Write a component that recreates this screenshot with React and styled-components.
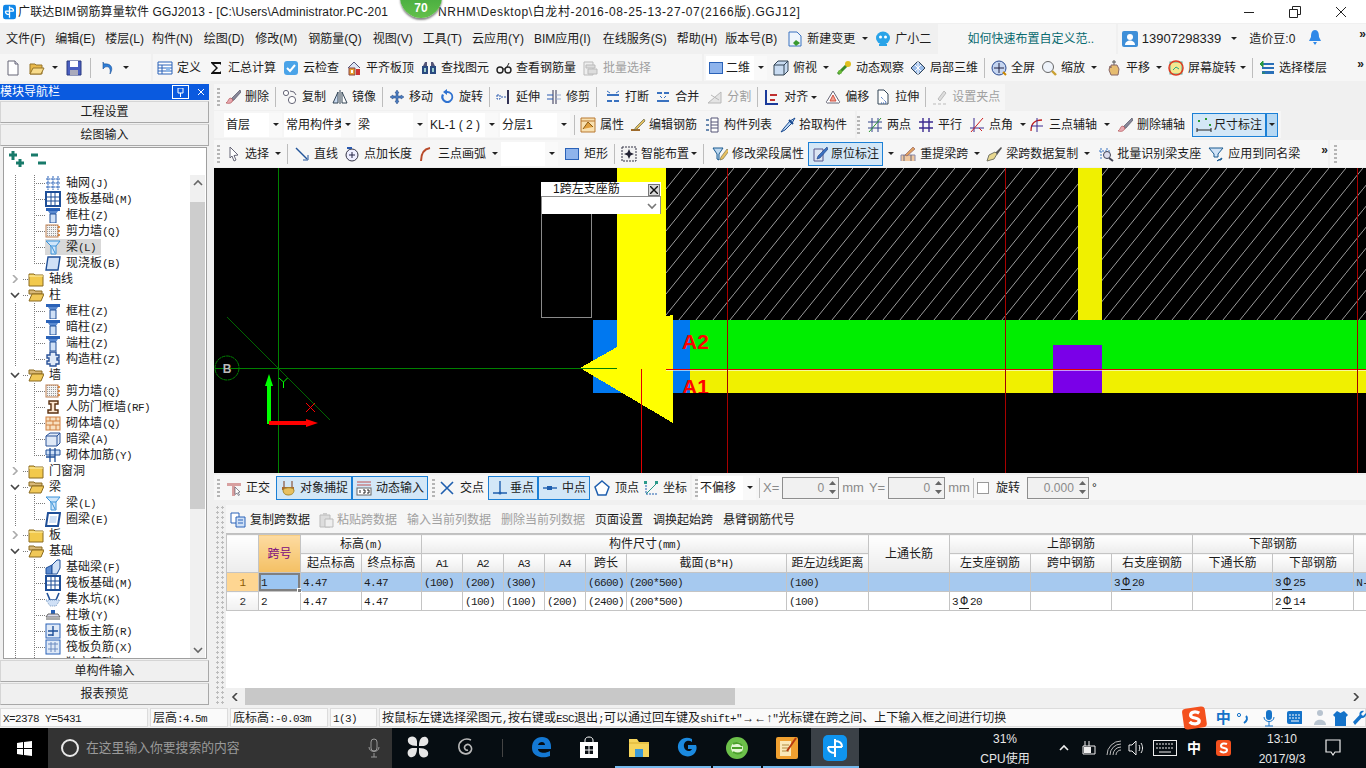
import React from 'react';
import styled, { createGlobalStyle } from 'styled-components';

const GlobalStyle = createGlobalStyle`
  html, body {
    margin: 0;
    padding: 0;
    background: #f0f0f0;
  }
  * {
    box-sizing: border-box;
  }
`;

const UI_FONT = '"Liberation Sans", "Noto Sans CJK SC", sans-serif';

const Page = styled.div`
  position: relative;
  width: 1366px;
  height: 768px;
  overflow: hidden;
  display: flex;
  flex-direction: column;
  background: #f0f0f0;
  color: #1c1c1c;
  font: 12px/16px ${UI_FONT};
`;

/* half width text, the app draws latin and digits in a narrow bitmap font */
const Hw = styled.span`
  font-family: "Liberation Mono", monospace;
  font-size: 11px;
  letter-spacing: -0.6px;
`;

const Label = styled.span`
  margin-left: ${(p) => p.$ml || 0}px;
  font-size: ${(p) => p.$size || 12}px;
`;

const Spacer = styled.span`
  width: ${(p) => p.$w}px;
  flex-shrink: 0;
`;

/* ---------- title and menu ---------- */

const TitleBar = styled.div`
  height: 23px;
  background: #fff;
  display: flex;
  align-items: center;
  padding-left: 3px;
  white-space: nowrap;
  flex-shrink: 0;
`;

const TitleHead = styled.div`
  width: 420px;
  margin-left: 2px;
  letter-spacing: 0.15px;
`;

const TitleTail = styled.div`
  flex: 1;
  letter-spacing: 0.62px;
`;

const WinButtons = styled.div`
  display: flex;
  width: 123px;
  flex-shrink: 0;
  justify-content: space-between;
  padding-right: 19px;
  align-items: center;
`;

const ScoreBadge = styled.div`
  position: absolute;
  left: 400px;
  top: -24px;
  width: 42px;
  height: 42px;
  border-radius: 50%;
  background: linear-gradient(#2f9a36, #63c04a);
  box-shadow: 0 2px 2px #8a8a8a;
  color: #fff;
  font-size: 12px;
  font-weight: bold;
  text-align: center;
  padding-top: 24px;
`;

const MenuBar = styled.div`
  height: 31px;
  display: flex;
  align-items: center;
  padding-left: 6px;
  gap: 10px;
  white-space: nowrap;
  flex-shrink: 0;
`;

const MenuItem = styled.span`
  margin-left: ${(p) => p.$ml || 0}px;
`;

const Banner = styled.div`
  width: 187px;
  height: 30px;
  margin-left: -3px;
  background: #f6f6f6;
  color: #0a6b70;
  display: flex;
  align-items: center;
  padding-left: 29px;
`;

const Account = styled.div`
  flex: 1;
  height: 30px;
  margin-left: -8px;
  background: #f6f6f6;
  display: flex;
  align-items: center;
  gap: 4px;
  padding-left: 4px;
`;

/* ---------- toolbars ---------- */

const ToolRow = styled.div`
  height: ${(p) => p.$h || 27}px;
  margin-bottom: ${(p) => p.$mb || 0}px;
  display: flex;
  gap: 2px;
  white-space: nowrap;
  flex-shrink: 0;
`;

const Bar = styled.div`
  display: flex;
  align-items: center;
  gap: ${(p) => p.$gap || 7}px;
  width: ${(p) => (p.$w ? `${p.$w}px` : 'auto')};
  flex: ${(p) => (p.$grow ? 1 : 'none')};
  padding: 0 3px 0 ${(p) => p.$pl ?? 3}px;
  background: #f6f6f6;
`;

const ToolBtn = styled.div`
  display: flex;
  align-items: center;
  gap: ${(p) => p.$tg ?? 4}px;
  height: 24px;
  margin-left: ${(p) => p.$ml || 0}px;
  padding: ${(p) => (p.$on ? '0 3px' : '0')};
  color: ${(p) => (p.$off ? '#a0a0a0' : '#1c1c1c')};
  background: ${(p) => (p.$on ? '#d3e7f7' : 'transparent')};
  border: ${(p) => (p.$on ? '1px solid #1b80d6' : 'none')};
`;

const Caret = styled.span`
  display: inline-block;
  width: 0;
  height: 0;
  margin-left: ${(p) => p.$ml || 0}px;
  border-left: 3px solid transparent;
  border-right: 3px solid transparent;
  border-top: 3px solid #222;
  flex-shrink: 0;
`;

const Sep = styled.span`
  width: 1px;
  height: 20px;
  margin: 0 ${(p) => p.$mx || 0}px;
  background: #bdbdbd;
  flex-shrink: 0;
`;

const Grip = styled.span`
  width: 3px;
  height: 18px;
  margin-left: ${(p) => p.$ml || 0}px;
  flex-shrink: 0;
  background: repeating-linear-gradient(#b5b5b5 0 2px, transparent 2px 4px);
`;

const More = styled.span`
  font-size: 12px;
  font-weight: bold;
  line-height: 10px;
  align-self: flex-start;
  margin: 5px 0 0 ${(p) => p.$ml || 0}px;
`;

const ComboBox = styled.div`
  width: ${(p) => p.$w}px;
  height: 24px;
  margin-left: ${(p) => p.$ml || 0}px;
  display: flex;
  align-items: center;
  flex-shrink: 0;
`;

const ComboValue = styled.div`
  flex: 1;
  height: 100%;
  background: #fff;
  padding: ${(p) => (p.$flush ? '0 0 0 2px' : '4px 0 0 2px')};
  overflow: hidden;
`;

const ComboArrow = styled.div`
  width: 13px;
  height: 100%;
  background: #f9f9f9;
  display: flex;
  align-items: center;
  justify-content: center;
`;

const SplitArrow = styled.div`
  width: 13px;
  height: 24px;
  margin-left: -7px;
  background: #b6d8f3;
  border: 1px solid #1b80d6;
  display: flex;
  align-items: center;
  justify-content: center;
`;

/* ---------- work area ---------- */

const Workspace = styled.div`
  height: 621px;
  margin-top: 3px;
  display: flex;
  gap: 5px;
  flex-shrink: 0;
`;

const Nav = styled.div`
  width: 209px;
  display: flex;
  flex-direction: column;
  gap: 1px;
`;

const NavHead = styled.div`
  height: 16px;
  background: #0a5adf;
  color: #fff;
  display: flex;
  align-items: center;
  line-height: 15px;
  flex-shrink: 0;
`;

const NavTitle = styled.div`
  flex: 1;
`;

const PinBox = styled.div`
  width: 17px;
  height: 14px;
  border: 1px solid #fff;
  display: flex;
  align-items: center;
  justify-content: center;
  margin-right: 5px;
`;

const NavClose = styled.div`
  width: 14px;
  margin-right: 1px;
  display: flex;
  justify-content: center;
`;

const NavButton = styled.div`
  height: 22px;
  flex-shrink: 0;
  background: #f0f0f0;
  border: 1px solid #a8a8a8;
  border-top-color: #d5d5d5;
  border-left-color: #d5d5d5;
  text-align: center;
  line-height: 21px;
`;

const TreeBox = styled.div`
  flex: 1;
  min-height: 0;
  margin: 0 2px 0 3px;
  background: #fff;
  border: 1px solid #9f9f9f;
  display: flex;
  flex-direction: column;
`;

const TreeTools = styled.div`
  height: 27px;
  flex-shrink: 0;
  padding: 3px 0 0 4px;
  display: flex;
  gap: 6px;
`;

const TreeBody = styled.div`
  flex: 1;
  min-height: 0;
  display: flex;
`;

const TreeList = styled.div`
  flex: 1;
  overflow: hidden;
`;

const dots = '#7a7a7a 0 1px, transparent 1px 2px';

const TreeRow = styled.div`
  height: 16px;
  display: flex;
  align-items: center;
  background-repeat: no-repeat;
  background-image: ${(p) => (p.$child
    ? `repeating-linear-gradient(${dots}), repeating-linear-gradient(${dots})`
    : 'none')};
  background-size: 1px 100%, 1px ${(p) => (p.$last ? '50%' : '100%')};
  background-position: 11px 0, 30px 0;
  padding-left: ${(p) => (p.$child ? 30 : 5)}px;
`;

const Chevron = styled.div`
  width: 11px;
  display: flex;
  justify-content: center;
`;

const Connector = styled.span`
  width: ${(p) => p.$w}px;
  margin-left: ${(p) => p.$ml || 0}px;
  border-top: 1px dotted #7a7a7a;
  flex-shrink: 0;
`;

const TreeLabel = styled.div`
  display: flex;
  align-items: center;
  gap: 5px;
  height: 16px;
  padding-right: 5px;
  background: ${(p) => (p.$sel ? '#d9d9d9' : 'transparent')};
`;

const Scroll = styled.div`
  width: 15px;
  margin-right: 1px;
  background: #f0f0f0;
  display: flex;
  flex-direction: column;
  align-items: center;
`;

const ScrollBtn = styled.div`
  height: 16px;
  width: 100%;
  flex-shrink: 0;
  display: flex;
  align-items: center;
  justify-content: center;
`;

const ScrollThumb = styled.div`
  width: 100%;
  height: 307px;
  margin-top: 11px;
  margin-bottom: auto;
  background: #cdcdcd;
`;

const Main = styled.div`
  width: 1152px;
  display: flex;
  flex-direction: column;
`;

const Canvas = styled.div`
  position: relative;
  height: 305px;
  margin-bottom: 2px;
  background: #000;
  flex-shrink: 0;
`;

const CanvasSvg = styled.svg`
  display: block;
`;

const Popup = styled.div`
  position: absolute;
  left: 327px;
  top: 14px;
  width: 120px;
  background: #fff;
`;

const PopupHead = styled.div`
  height: 14px;
  padding-left: 12px;
  line-height: 14px;
  display: flex;
  justify-content: space-between;
  color: #111;
`;

const PopupClose = styled.div`
  width: 12px;
  height: 12px;
  margin: 2px 1px 0 0;
  background: #d8d8d8;
  border: 1px solid #777;
  display: flex;
  align-items: center;
  justify-content: center;
`;

const PopupCombo = styled.div`
  height: 18px;
  border: 1px solid #8c8c8c;
  border-bottom: 0;
  display: flex;
  align-items: center;
  justify-content: flex-end;
  padding-right: 3px;
`;

const NumBox = styled.div`
  width: ${(p) => p.$w || 57}px;
  height: 22px;
  margin-left: ${(p) => p.$ml || 0}px;
  background: #f1f1f1;
  border: 1px solid #8e8e8e;
  color: #8a8a8a;
  display: flex;
  align-items: center;
  justify-content: flex-end;
  gap: 5px;
  padding-right: 2px;
  font-family: "Liberation Sans", sans-serif;
`;

const Spin = styled.div`
  display: flex;
  flex-direction: column;
  gap: 5px;
`;

const GrayText = styled.span`
  color: #8a8a8a;
  font-size: 13px;
  margin-left: ${(p) => p.$ml || 0}px;
`;

const CheckBox = styled.span`
  width: 12px;
  height: 12px;
  background: #fff;
  border: 1px solid #9a9a9a;
  flex-shrink: 0;
`;

/* ---------- span table ---------- */

const GridPanel = styled.div`
  height: 200px;
  margin-top: 5px;
  display: flex;
`;

const GridGrip = styled.div`
  width: 12px;
  flex-shrink: 0;
  background:
    radial-gradient(circle, #bcbcbc 1px, transparent 1.2px) 1px 0 / 5px 5px;
`;

const GridBody = styled.div`
  flex: 1;
  min-width: 0;
  display: flex;
  flex-direction: column;
  background: #fff;
`;

const GridTools = styled.div`
  height: 28px;
  background: #f6f6f6;
  display: flex;
  align-items: center;
  padding: 1px 0 0 4px;
  gap: 10px;
  white-space: nowrap;
  flex-shrink: 0;
`;

const TableWrap = styled.div`
  flex: 1;
  min-height: 0;
  overflow: hidden;
  border-top: 1px solid #c0c0c0;
`;

const Table = styled.table`
  width: 1140px;
  table-layout: fixed;
  border-collapse: collapse;
  white-space: nowrap;
`;

const Th = styled.th`
  height: 19px;
  padding: 0;
  font-weight: normal;
  color: ${(p) => (p.$accent ? '#7a0a80' : '#1c1c1c')};
  background: ${(p) => (p.$accent
    ? 'linear-gradient(#fddba1, #f4c064)'
    : 'linear-gradient(#fff, #ececec)')};
  border: 1px solid #c4c4c4;
  overflow: hidden;
`;

const Td = styled.td`
  position: relative;
  height: 19px;
  padding: 0 0 0 ${(p) => (p.$center ? 0 : 2)}px;
  text-align: ${(p) => (p.$center ? 'center' : 'left')};
  background: ${(p) => (p.$sel ? '#a6c9ef' : '#fff')};
  border: 1px solid #c4c4c4;
  overflow: hidden;
`;

const RowHead = styled(Td)`
  background: ${(p) => (p.$sel ? '#fed692' : 'linear-gradient(#fff, #f0f0f0)')};
  color: ${(p) => (p.$sel ? '#8a5a00' : '#333')};
`;

const ActiveCell = styled(Td)`
  overflow: visible;
  background: #9cc6f2;
  box-shadow: inset 0 0 0 2px #808080;
`;

const FillHandle = styled.span`
  position: absolute;
  right: -2px;
  bottom: -2px;
  width: 5px;
  height: 5px;
  background: #808080;
  border: 1px solid #fff;
`;

const BarSign = styled.span`
  display: inline-block;
  width: 10px;
  margin: 0 1px;
  font-family: "Liberation Mono", monospace;
  font-size: 12px;
  line-height: 11px;
  text-align: center;
  border-bottom: 1px solid #222;
`;

const HScroll = styled.div`
  height: 17px;
  flex-shrink: 0;
  display: flex;
  align-items: center;
  background: #f0f0f0;
`;

const HScrollBtn = styled.div`
  width: 17px;
  display: flex;
  justify-content: center;
  flex-shrink: 0;
`;

const HScrollThumb = styled.div`
  width: 490px;
  height: 100%;
  margin-right: auto;
  background: #c8c8c8;
`;

/* ---------- status ---------- */

const StatusBar = styled.div`
  height: 19px;
  margin-top: 3px;
  display: flex;
  gap: 2px;
  flex-shrink: 0;
  white-space: nowrap;
`;

const StatusCell = styled.div`
  width: ${(p) => (p.$w ? `${p.$w}px` : 'auto')};
  flex: ${(p) => (p.$w ? 'none' : 1)};
  background: #fafafa;
  border: 1px solid #dcdcdc;
  padding: 1px 0 0 2px;
  line-height: 16px;
`;

const Ime = styled.div`
  position: absolute;
  left: 1182px;
  top: 705px;
  width: 184px;
  height: 26px;
  display: flex;
  align-items: center;
  gap: 5px;
`;

const ImeChar = styled.span`
  color: #1573c9;
  font-weight: bold;
  font-size: 15px;
  margin-left: 3px;
`;

/* ---------- taskbar ---------- */

const Taskbar = styled.div`
  height: 40px;
  margin-top: 1px;
  background: #060d12;
  display: flex;
  color: #fff;
  flex-shrink: 0;
`;

const StartBtn = styled.div`
  width: 48px;
  background: #000;
  display: flex;
  align-items: center;
  justify-content: center;
`;

const SearchBox = styled.div`
  width: 344px;
  background: #333;
  display: flex;
  align-items: center;
  padding: 0 12px;
  color: #9a9a9a;
  font-size: 12.8px;
  gap: 6px;
`;

const SearchHint = styled.span`
  flex: 1;
`;

const TaskCell = styled.div`
  width: 48px;
  margin-left: ${(p) => p.$ml || 0}px;
  display: flex;
  align-items: center;
  justify-content: center;
  background: ${(p) => (p.$active ? '#3b4147' : 'transparent')};
  border-bottom: 2px solid ${(p) => (p.$open ? '#76b9ed' : 'transparent')};
  padding-top: ${(p) => (p.$open ? 2 : 0)}px;
`;

const TaskDivider = styled.span`
  width: 1px;
  height: 18px;
  margin: 11px 14px 0 12px;
  background: #444;
`;

const Tray = styled.div`
  margin-left: auto;
  display: flex;
  align-items: center;
`;

const TrayStack = styled.div`
  width: ${(p) => p.$w}px;
  margin: 1px ${(p) => p.$mr || 0}px 0 ${(p) => p.$ml || 0}px;
  text-align: center;
  line-height: 20px;
  font-size: 12px;
  color: #e8e8e8;
`;

const TrayIcon = styled.div`
  width: ${(p) => p.$w || 25}px;
  display: flex;
  justify-content: center;
  font-size: 14px;
  font-weight: bold;
`;

const IconSvg = styled.svg`
  flex-shrink: 0;
`;

/* ---------- icons, 16 x 16 ---------- */

const B = '#2a62b8';
const LB = '#8fb8e8';

const icons = {
  newDoc: <><path d="M3 1h7l3 3v11H3z" fill="#fff" stroke="#667" /><path d="M10 1v3h3" fill="#dde" stroke="#667" /></>,
  open: <><path d="M1 4h5l1 1h6v9H1z" fill="#e8b84a" stroke="#96752a" /><path d="M4 8h11l-3 6H1z" fill="#f8dc8c" stroke="#96752a" /></>,
  save: <><path d="M1 1h14v14H1z" fill="#4a5fc0" stroke="#2a3a80" /><path d="M4 1h8v6H4z" fill="#fff" /><path d="M4 10h8v5H4z" fill="#aab" /></>,
  undo: <path d="M4 2v7l2-2c4-1 6 1 5 7 4-6 1-11-6-10z" fill="#2f7fd8" stroke="#1a4f98" strokeWidth=".6" />,
  define: <><path d="M1 2h14v12H1z" fill="#fff" stroke={B} /><path d="M1 5h14M5 5v9M1 8h14M1 11h14" stroke={B} fill="none" /><path d="M9 7h4v5H9z" fill={LB} /></>,
  sigma: <path d="M3 2h10v3l-1-1H6l4 4-4 4h6l1-1v3H3v-1l5-5-5-5z" fill="#111" />,
  cloud: <><rect x="1" y="1" width="14" height="14" rx="3" fill="#4aa3e8" /><path d="M4 8l3 3 5-6" stroke="#fff" strokeWidth="2" fill="none" /></>,
  align: <><path d="M2 8l6-6 6 6" fill="#dde6f4" stroke="#557" /><path d="M3 8h6v7H3z" fill="#e8a030" stroke="#844" /><path d="M10 9h4v6h-4z" fill="#c33" /><path d="M5 10h2v3H5z" fill="#fff" /></>,
  binoculars: <><path d="M2 6l2-4h2v4zM14 6l-2-4h-2v4z" fill="#557" /><path d="M1 6h6v8H1zM9 6h6v8H9z" fill="#2a4a80" /><path d="M3 8h2v4H3zM11 8h2v4h-2z" fill="#9cc" /></>,
  glasses: <><circle cx="4" cy="10" r="3" fill="none" stroke="#222" strokeWidth="1.4" /><circle cx="12" cy="10" r="3" fill="none" stroke="#222" strokeWidth="1.4" /><path d="M7 9h2M11 7l2-4" stroke="#222" fill="none" /></>,
  batch: <><path d="M1 2h9v13H1z" fill="#eee" stroke="#bbb" /><path d="M3 5h9v3H3zM5 9h9v5H5z" fill="#ddd" stroke="#bbb" /></>,
  square: <rect x="1.5" y="2.5" width="13" height="11" fill="#8fb4ec" stroke="#2a62b8" />,
  box: <><path d="M1 5l4-4h10v10l-4 4H1z" fill="#c9dcf2" stroke="#345" /><path d="M1 5h10v10M11 5l4-4" stroke="#345" fill="none" /></>,
  orbit: <><path d="M2 14L12 4" stroke="#3a8a2a" strokeWidth="3" /><circle cx="12" cy="4" r="3" fill="#e0c020" /><circle cx="4" cy="12" r="2" fill="#68b838" /></>,
  part3d: <><path d="M8 1l7 7-7 7-7-7z" fill="#9cbce8" stroke="#345" /><path d="M5 5l6 6M11 5l-6 6M8 1v14" stroke="#fff" /></>,
  fullscreen: <><circle cx="8" cy="8" r="7" fill="#c5d5f0" stroke="#2a4a90" /><path d="M8 3v10M3 8h10" stroke="#224" /><path d="M12 12l3 3" stroke="#c80" strokeWidth="2" /></>,
  zoom: <><circle cx="7" cy="7" r="5.5" fill="#eef3fa" stroke="#666" /><path d="M11 11l4 4" stroke="#c9a030" strokeWidth="2.4" /></>,
  pan: <><path d="M8 0v5M6 2h4" stroke="#555" /><path d="M3 10l1-4 1 2V5h6l2 4-1 6H5z" fill="#e6bc70" stroke="#866" /></>,
  rotateScreen: <><rect x="2" y="2" width="12" height="12" fill="#f4e890" stroke="#5a9" /><circle cx="8" cy="8" r="7" fill="none" stroke="#e03a20" strokeWidth="1.5" /><path d="M5 10l3-3 3 2" stroke="#2a8" fill="none" /></>,
  floors: <><path d="M3 3h12v2H3zM3 7h12v2H3zM3 11h12v3H3z" fill="#2a70b8" /><path d="M1 4l3-3v6zM3 13h3" fill="#2a9a40" stroke="#2a9a40" /></>,
  eraser: <><path d="M15 1L7 9l-2 4 4-2 7-8z" fill="#889" stroke="#445" strokeWidth=".6" /><path d="M6 9c-3 0-2 3-5 5 4 1 6 0 7-3z" fill="#e8a8b0" stroke="#a44" strokeWidth=".6" /></>,
  copy: <><circle cx="4" cy="4" r="2.6" fill="#fff" stroke="#667" /><circle cx="10" cy="11" r="3.6" fill="#fff" stroke="#667" /><path d="M8 2l4 1 2 3" stroke="#667" fill="none" /></>,
  mirror: <><path d="M1 14L6 3v11z" fill="#c9daf0" stroke="#345" /><path d="M15 14L10 3v11z" fill="#fff" stroke="#345" /><path d="M8 1v14" stroke="#345" /></>,
  move: <path d="M8 1l2 3H9v3h3V6l3 2-3 2V9H9v3h1l-2 3-2-3h1V9H4v1L1 8l3-2v1h3V4H6z" fill="#4a7cc0" stroke="#2a4a80" strokeWidth=".5" />,
  rotate: <path d="M8 2a6 6 0 1 1-5 3l2 1a4 4 0 1 0 3-2v2L4 3l4-3z" fill="#2f72d0" />,
  extend: <><path d="M12 1v14" stroke="#335" strokeWidth="2" /><path d="M1 6h3v4H1zM5 8h6" stroke="#2a5ab0" fill="none" strokeDasharray="2 1" /></>,
  trim: <><path d="M7 1v14M10 1v14" stroke="#335" /><path d="M1 6h6M1 10h6" stroke="#2a5ab0" /><path d="M10 6h5M10 10h5" stroke="#9ac" /></>,
  breakIco: <><path d="M2 5h12v2H2zM2 11h5v2H2zM9 11h5v2H9z" fill="#3a72c0" /><path d="M2 2l3 2M14 2l-3 2" stroke="#3a72c0" /></>,
  merge: <><path d="M2 3h5v2H2zM9 3h5v2H9zM2 11h12v2H2z" fill="#3a72c0" /><path d="M5 7l2 2M11 7L9 9" stroke="#3a72c0" /></>,
  split: <><path d="M1 14L14 3v11z" fill="#e4e4e4" stroke="#b8b8b8" /><path d="M4 6l8 5" stroke="#b8b8b8" /></>,
  alignLeft: <><path d="M2 1v14h12" stroke="#1a3a9a" strokeWidth="2" fill="none" /><path d="M6 5h7v2H6zM6 10h5v2H6z" fill="#c03030" /></>,
  offset: <><path d="M8 2l6 10a1 1 0 0 1-1 2H3a1 1 0 0 1-1-2z" fill="#fff" stroke="#667" /><path d="M8 6l3 6H5z" fill="#f0a090" stroke="#d05040" /></>,
  stretch: <><path d="M3 1h6l4 4v10H3z" fill="#fff" stroke="#345" /><path d="M6 8l6 6M6 14h6" stroke="#2a5ab0" strokeDasharray="1 1" /></>,
  gripIco: <><path d="M12 2l-6 8 2 2 6-8z" fill="#ddd" stroke="#bbb" /><path d="M1 15h3M6 15h3M11 15h3" stroke="#bbb" /></>,
  prop: <><path d="M1 1h14v14H1z" fill="#f8e0b0" stroke="#b87830" /><path d="M3 12l5-7 5 5" fill="#e0a040" stroke="#8a5a10" /><path d="M1 4h14" stroke="#b87830" /></>,
  editBar: <><path d="M1 13h9" stroke="#a06a2a" strokeWidth="2" /><path d="M14 2L6 10l-2 3 3-1 8-8z" fill="#e4c060" stroke="#664" strokeWidth=".7" /></>,
  list: <><path d="M2 2h3v2H2zM2 7h3v2H2zM2 12h3v2H2z" fill="#6a8ab0" /><path d="M7 1h7v14H7z" fill="#fff" stroke="#557" /><path d="M7 5h7M7 8h7M7 11h7" stroke="#557" /></>,
  pick: <><path d="M15 1l-5 3-6 7-3 4 4-2 7-7z" fill="#bcd8f4" stroke="#1a4a90" /><path d="M9 3l4 4" stroke="#1a4a90" strokeWidth="2" /></>,
  twoPoint: <><path d="M5 1v14M11 1v14M1 5h14M1 11h14" stroke="#334488" /><path d="M2 15L14 1" stroke="#2a9a30" /></>,
  parallel: <path d="M5 1v14M11 1v14M1 5h14M1 11h14" stroke="#3a2a90" fill="none" strokeWidth="1.4" />,
  angle: <><path d="M5 1v14M1 11h14" stroke="#3a2a90" /><path d="M2 15L14 1" stroke="#d02020" /><path d="M10 11l3 3" stroke="#d02020" /></>,
  arc: <><path d="M2 14C2 6 6 3 13 3" stroke="#c02020" fill="none" strokeWidth="1.3" /><path d="M8 1v14M2 9h12" stroke="#3a2a90" /></>,
  dimension: <><path d="M1 11v4M15 11v4M1 13h14" stroke="#222" /><rect x="2" y="3" width="2" height="2" fill="#2a9a30" /><rect x="9" y="1" width="2" height="2" fill="#2a9a30" /><rect x="13" y="7" width="2" height="2" fill="#2a9a30" /></>,
  cursor: <path d="M4 1l8 8-4 .5L10 14l-2 1-2-5-2 2z" fill="#fff" stroke="#667" />,
  line: <><path d="M2 2l11 11" stroke="#22559a" strokeWidth="1.4" /><path d="M14 9v5H9" stroke="#22559a" fill="none" /></>,
  pointLen: <><circle cx="8" cy="9" r="6" fill="#eef" stroke="#334" /><path d="M8 6v6M5 9h6" stroke="#224" /><path d="M3 2h5" stroke="#2a5ab0" strokeWidth="2" /></>,
  arc3: <path d="M3 15C3 8 6 3 12 2" stroke="#b84a2a" fill="none" strokeWidth="2" />,
  smart: <><rect x="1" y="1" width="14" height="14" fill="#f2f2f2" stroke="#334" strokeDasharray="2 1" /><path d="M8 3l1.5 3.5L13 8l-3.5 1.5L8 13l-1.5-3.5L3 8l3.5-1.5z" fill="#223" /></>,
  funnelEdit: <><path d="M1 2h10L7 8v6l-2-1V8z" fill="#bcd8f0" stroke="#1a5a90" /><path d="M15 3l-6 8-1 3 3-1 6-8z" fill="#e8c060" stroke="#664" strokeWidth=".6" /></>,
  inPlace: <><path d="M2 3h9v12H2z" fill="#dce6f2" stroke="#558" /><path d="M15 1L6 10l-1 3 3-1 8-9z" fill="#3a72c0" stroke="#1a3a80" strokeWidth=".6" /></>,
  lift: <><path d="M1 15V9h14v6" fill="#f0c8a0" stroke="#88a" /><path d="M4 9v6M11 9v6" stroke="#667" /><path d="M5 9l8-8 2 2-8 7z" fill="#e0a060" stroke="#855" strokeWidth=".6" /></>,
  brush: <><path d="M15 1l-6 6 2 2 5-7z" fill="#555" /><path d="M9 6L3 9l-2 6 7-2 3-5z" fill="#e8d890" stroke="#776" /></>,
  support: <><path d="M1 5h11M3 2v11M9 2v11" stroke="#3a72c0" strokeDasharray="2 1" /><circle cx="9" cy="9" r="3.5" fill="#dde" stroke="#445" /><path d="M11 12l4 3" stroke="#445" strokeWidth="2" /></>,
  applySame: <><path d="M1 2h14L10 8v3H6V8z" fill="#cfe2f6" stroke="#1a5a90" /><path d="M9 15l5-3-1 2h-3z" fill="#3a82d0" stroke="#1a5a90" /></>,
  ortho: <><path d="M1 3h14v3H9v10H6V6H1z" fill="#d8a0a0" /><path d="M9 7l5 5-2 .5 1.5 2.5-1 .6-1.5-2.5-2 1.4z" fill="#fff" stroke="#445" strokeWidth=".6" /></>,
  snap: <><path d="M4 1v7M12 1v7" stroke="#7a3a1a" /><path d="M2 7h12v3H2z" fill="#a86a30" /><path d="M3 10c2-3 10-3 11 0 0 4-3 5-6 5-3 0-5-2-5-5z" fill="#e8c060" stroke="#a88a30" /></>,
  dynamic: <><path d="M1 2h14M1 5h14" stroke="#c05050" /><rect x="1" y="8" width="14" height="7" fill="#fff" stroke="#666" /><path d="M4 10v3M7 10h2v3H7M11 10h2v3h-2" stroke="#222" fill="none" /></>,
  cross: <path d="M2 2l12 12M14 2L2 14" stroke="#1f5faf" strokeWidth="1.6" />,
  perp: <><path d="M8 1v12M1 13h14" stroke="#1f5faf" strokeWidth="1.4" /><circle cx="8" cy="13" r="1.5" fill="#1f5faf" /></>,
  midpoint: <><path d="M1 8h14" stroke="#1f5faf" strokeWidth="1.4" /><rect x="5" y="6" width="5" height="4" fill="#1f5faf" /></>,
  vertex: <path d="M8 1l7 6-3 8H4L1 7z" fill="#fff" stroke="#1f5faf" strokeWidth="1.5" />,
  coord: <><path d="M3 2v12h12" stroke="#1f5faf" strokeDasharray="2 1" fill="none" /><path d="M3 14L14 3" stroke="#2a9a8a" /><rect x="1" y="1" width="3" height="3" fill="#2a9a8a" /><rect x="12" y="1" width="3" height="3" fill="#2a9a8a" /></>,
  copySpan: <><path d="M1 1h8v10H1z" fill="#fff" stroke={B} /><path d="M6 5h9v10H6z" fill="#cfe0f6" stroke={B} /><path d="M8 8h5M8 11h5" stroke={B} /></>,
  pasteSpan: <><path d="M2 3h10v12H2z" fill="#ddd" stroke="#bbb" /><path d="M5 1h4v3H5z" fill="#ccc" /><path d="M7 7h8v8H7z" fill="#eee" stroke="#bbb" /></>,
  changeDoc: <><path d="M2 1h8l4 4v10H2z" fill="#eef5fc" stroke="#3a72c0" /><path d="M9 9l4 3-4 3-3-3z" fill="#3a9a30" /></>,
  robot: <><ellipse cx="8" cy="7" rx="7" ry="6.5" fill="#29a3e8" /><circle cx="5.5" cy="6" r="1.5" fill="#fff" /><circle cx="10.5" cy="6" r="1.5" fill="#fff" /><path d="M4 14h8" stroke="#29a3e8" strokeWidth="2" /></>,
  user: <><rect width="16" height="16" rx="2" fill="#3f8fd8" /><circle cx="8" cy="6" r="3" fill="#fff" /><path d="M3 14c0-6 10-6 10 0z" fill="#fff" /></>,
  bell: <><path d="M8 1c3 0 4 3 4 7l2 4H2l2-4c0-4 1-7 4-7z" fill="#2f88e8" /><path d="M6 13h4l-2 3z" fill="#2f88e8" /></>,
  folderClosed: <><path d="M1 3h5l1 1h8v11H1z" fill="#f2c94c" stroke="#8a6a20" /><path d="M1 5h14" stroke="#fff2b0" /></>,
  folderOpen: <><path d="M1 3h5l1 1h7v3H1z" fill="#d8b878" stroke="#8a6a20" /><path d="M4 7h12l-3 7H1z" fill="#f0c858" stroke="#8a6a20" /></>,
  axis: <path d="M3 1v14M8 1v14M1 4h14M1 8h14M1 12h14M13 1v14" stroke="#2a62b8" fill="none" strokeDasharray="2 .5" />,
  raft: <><rect x="1" y="1" width="14" height="14" fill="#fff" stroke="#1f4f98" strokeWidth="2" /><path d="M6 1v14M10 1v14M1 6h14M1 10h14" stroke="#1f4f98" /></>,
  column: <><path d="M1 1h14v3H1z" fill="#2a62b8" /><path d="M3 4h10L11 7H5z" fill="#5a8ad0" /><path d="M5 7h6v9H5z" fill="#cfe0f6" stroke="#1f4f98" /></>,
  shear: <><defs><pattern id="wallDots" width="2" height="2" patternUnits="userSpaceOnUse"><rect width="2" height="2" fill="#f4f4f4" /><rect width="1" height="1" fill="#999" /></pattern></defs><rect x="1" y="2" width="12" height="12" fill="url(#wallDots)" stroke="#c08050" /><path d="M14 3v2M14 7v2M14 11v2" stroke="#d06a10" strokeWidth="1.4" /></>,
  beam: <><path d="M1 2h14l-4 5v8H6V7z" fill="#cfe6fa" stroke="#3a92d8" /><path d="M5 7h6M7 8l3 6" stroke="#3a92d8" /></>,
  slab: <><path d="M3 2h12l-2 13H1z" fill="#cfe0f6" stroke="#1f4f98" strokeWidth="1.4" /></>,
  puzzle: <path d="M5 1h6v3h3v3h-2v2h2v4h-3v2H5v-2H2v-3h2V7H2V4h3z" fill="#dfe9f7" stroke="#2a5298" strokeWidth="1.4" />,
  doorFrame: <path d="M4 2h9v3h-3v6h3v3H3v-3h3V5H4z" fill="#fbe6d0" stroke="#5a3010" strokeWidth="1.4" />,
  brick: <><rect x="1" y="2" width="14" height="13" fill="#f8e0c0" stroke="#d08040" /><path d="M1 6h14M1 10h14M5 2v4M11 2v4M8 6v4M5 10v5M11 10v5" stroke="#d08040" /></>,
  hiddenBeam: <><path d="M1 5l4-3h10v10l-3 3H1z" fill="#dfe9f7" stroke="#2a5298" /><path d="M1 5h11v10M12 5l3-3" stroke="#2a5298" fill="none" /></>,
  wallBar: <><path d="M1 3h14v5H1z" fill="#cfe0f6" stroke="#1f4f98" /><path d="M5 1v14M10 1v14M1 10h9" stroke="#1f4f98" strokeWidth="1.3" /></>,
  ringBeam: <><path d="M3 2h12l-2 13H1z" fill="#fff" stroke="#1f4f98" strokeWidth="2" /><path d="M5 5h7l-1 7H4z" fill="#cfe0f6" /></>,
  footBeam: <><path d="M1 15V9l6-3v9z" fill="#5a8ad0" stroke="#1f4f98" /><path d="M7 6l5-5h3v8l-3 6H7z" fill="#cfe0f6" stroke="#1f4f98" /></>,
  pit: <><path d="M2 2l3 7h6l3-7" fill="none" stroke="#1f4f98" strokeWidth="1.6" /><path d="M1 9h14l-4 6H5z" fill="#cfe0f6" stroke="#7a9ac0" strokeDasharray="1 1" /></>,
  pier: <><path d="M6 3h4v4H6z" fill="#2a62b8" /><path d="M3 7h10l2 3H1z" fill="#dde" stroke="#666" /><path d="M1 11h14v2H1z" fill="#aaa" /></>,
  mainBar: <><rect x="1" y="1" width="14" height="14" fill="#dfe9f7" stroke="#2a62b8" /><path d="M8 3v10M3 8h10M3 12h5" stroke="#1f4f98" strokeWidth="1.4" fill="none" /></>,
  negBar: <><rect x="1" y="1" width="14" height="14" fill="#dfe9f7" stroke="#2a62b8" /><path d="M3 5h10M3 10h10M6 3v10M10 3v10" stroke="#6a8ac0" /></>,
  plusTree: <><path d="M5 0v9M1 4h8" stroke="#187a6a" strokeWidth="3" /><path d="M12 8v8M8 12h8" stroke="#187a6a" strokeWidth="3" /></>,
  minusTree: <><path d="M1 4h7M8 12h8" stroke="#187a6a" strokeWidth="3" /></>,
};

const Ico = ({ name, size = 16 }) => (
  <IconSvg width={size} height={size} viewBox="0 0 16 16">
    {icons[name]}
  </IconSvg>
);

const Tool = ({ icon, children, off, on, ml, tg }) => (
  <ToolBtn $off={off} $on={on} $ml={ml} $tg={tg}>
    <Ico name={icon} />
    {children}
  </ToolBtn>
);

const Combo = ({ w, ml, children }) => (
  <ComboBox $w={w} $ml={ml}>
    <ComboValue>{children}</ComboValue>
    <ComboArrow><Caret /></ComboArrow>
  </ComboBox>
);

const SpinArrows = () => (
  <Spin>
    <svg width="7" height="4"><path d="M0 4l3.5-4L7 4z" fill="#666" /></svg>
    <svg width="7" height="4"><path d="M0 0l3.5 4L7 0z" fill="#666" /></svg>
  </Spin>
);

const Chev = ({ dir, color = '#666' }) => {
  const paths = {
    up: 'M1 6l4-4 4 4',
    down: 'M1 2l4 4 4-4',
    left: 'M7 0L3 4l4 4',
    right: 'M3 0l4 4-4 4',
  };
  return (
    <svg width="10" height="8" viewBox="0 0 10 8">
      <path d={paths[dir]} stroke={color} strokeWidth="1.6" fill="none" />
    </svg>
  );
};

/* ---------- tree data ---------- */

const tree = [
  { c: 1, icon: 'axis', t: '轴网', k: '(J)' },
  { c: 1, icon: 'raft', t: '筏板基础', k: '(M)' },
  { c: 1, icon: 'column', t: '框柱', k: '(Z)' },
  { c: 1, icon: 'shear', t: '剪力墙', k: '(Q)' },
  { c: 1, icon: 'beam', t: '梁', k: '(L)', sel: 1 },
  { c: 1, icon: 'slab', t: '现浇板', k: '(B)', last: 1 },
  { t: '轴线' },
  { t: '柱', open: 1 },
  { c: 1, icon: 'column', t: '框柱', k: '(Z)' },
  { c: 1, icon: 'column', t: '暗柱', k: '(Z)' },
  { c: 1, icon: 'column', t: '端柱', k: '(Z)' },
  { c: 1, icon: 'puzzle', t: '构造柱', k: '(Z)', last: 1 },
  { t: '墙', open: 1 },
  { c: 1, icon: 'shear', t: '剪力墙', k: '(Q)' },
  { c: 1, icon: 'doorFrame', t: '人防门框墙', k: '(RF)' },
  { c: 1, icon: 'brick', t: '砌体墙', k: '(Q)' },
  { c: 1, icon: 'hiddenBeam', t: '暗梁', k: '(A)' },
  { c: 1, icon: 'wallBar', t: '砌体加筋', k: '(Y)', last: 1 },
  { t: '门窗洞' },
  { t: '梁', open: 1 },
  { c: 1, icon: 'beam', t: '梁', k: '(L)' },
  { c: 1, icon: 'ringBeam', t: '圈梁', k: '(E)', last: 1 },
  { t: '板' },
  { t: '基础', open: 1 },
  { c: 1, icon: 'footBeam', t: '基础梁', k: '(F)' },
  { c: 1, icon: 'raft', t: '筏板基础', k: '(M)' },
  { c: 1, icon: 'pit', t: '集水坑', k: '(K)' },
  { c: 1, icon: 'pier', t: '柱墩', k: '(Y)' },
  { c: 1, icon: 'mainBar', t: '筏板主筋', k: '(R)' },
  { c: 1, icon: 'negBar', t: '筏板负筋', k: '(X)' },
  { c: 1, icon: 'pier', t: '独立基础', k: '(D)' },
];

const TreeItem = ({ item }) => {
  if (item.c) {
    return (
      <TreeRow $child $last={item.last}>
        <Connector $w={11} />
        <TreeLabel $sel={item.sel}>
          <Ico name={item.icon} />
          <span>{item.t}<Hw>{item.k}</Hw></span>
        </TreeLabel>
      </TreeRow>
    );
  }
  return (
    <TreeRow>
      <Chevron><Chev dir={item.open ? 'down' : 'right'} color={item.open ? '#444' : '#aaa'} /></Chevron>
      <Connector $w={5} $ml={3} />
      <Ico name={item.open ? 'folderOpen' : 'folderClosed'} />
      <Label $ml={5}>{item.t}</Label>
    </TreeRow>
  );
};

/* ---------- span table data ---------- */

const colWidths = [32, 42, 61, 60, 41, 41, 41, 41, 41, 160, 82, 81, 81, 81, 81, 80, 81, 13];

const Rebar = ({ n, d }) => (
  <span><Hw>{n}</Hw><BarSign>Φ</BarSign><Hw>{d}</Hw></span>
);

const Cell = ({ v, sel }) => <Td $sel={sel}><Hw>{v}</Hw></Td>;

/* ---------- canvas ---------- */

const CadDrawing = () => (
  <CanvasSvg width="1152" height="305" viewBox="214 168 1152 305">
    <defs>
      <pattern id="hatch" width="17" height="21" patternUnits="userSpaceOnUse" x="666" y="168">
        <path d="M0 21L17 0" stroke="#c4c4c4" strokeWidth="0.8" />
      </pattern>
    </defs>
    <rect x="666" y="168" width="700" height="152" fill="url(#hatch)" />
    <rect x="1078" y="168" width="24" height="152" fill="#f0f000" />
    <rect x="593" y="320" width="97" height="73" fill="#0078f0" />
    <rect x="690" y="320" width="676" height="49" fill="#00ee00" />
    <rect x="690" y="369" width="676" height="24" fill="#f0f000" />
    <rect x="1053" y="345" width="49" height="48" fill="#7a00e8" />
    <path d="M617 168h49v148l7-1v108l-93-55 37-21z" fill="#ffff00" shapeRendering="crispEdges" />
    <path d="M215 368.500H617" stroke="#008000" />
    <path d="M278.500 168V473" stroke="#008000" />
    <path d="M227 317L330 420" stroke="#007000" strokeWidth="0.9" />
    <circle cx="227" cy="368" r="12" fill="none" stroke="#008000" strokeDasharray="4 .6" />
    <text x="227" y="373" textAnchor="middle" fill="#bbb" fontSize="12" fontWeight="bold" fontFamily="Liberation Sans">B</text>
    <rect x="267" y="384" width="4" height="40" fill="#00ff00" />
    <path d="M269 374l4 12h-8z" fill="#00ff00" />
    <rect x="269" y="421" width="38" height="4" fill="#ff0000" />
    <path d="M318 423l-12-4v8z" fill="#ff0000" />
    <path d="M279 378l4.500 4 4-4M283.500 382v6" stroke="#00ff00" fill="none" />
    <path d="M306 403l9 9M315 403l-9 9" stroke="#ff0000" />
    <path d="M641.500 369V473" stroke="#e00000" />
    <path d="M666 369.500H1366" stroke="#e00000" />
    <path d="M666 370.500H1366" stroke="#fff" opacity="0.6" />
    <path d="M727.500 168V473M1005.500 168V473M1357.500 168V473" stroke="#a80000" />
    <text x="682" y="349" fill="#ff0000" fontSize="21" fontWeight="bold" fontFamily="Liberation Sans">A2</text>
    <svg x="670" y="372" width="60" height="21" viewBox="670 372 60 21">
      <text x="682" y="394" fill="#ff0000" fontSize="21" fontWeight="bold" fontFamily="Liberation Sans">A1</text>
    </svg>
    <rect x="541.500" y="200.500" width="50" height="117" fill="none" stroke="#8a8a8a" />
  </CanvasSvg>
);

const App = () => (
  <Page>
    <GlobalStyle />

    <TitleBar>
      <svg width="13" height="16" viewBox="0 0 16 18">
        <rect width="16" height="18" rx="3" fill="#1187e8" />
        <path d="M8 2v14M3 8h10M3 8c0 3 2 4 5 4M13 8c0-3-2-4-5-4" stroke="#fff" strokeWidth="1.6" fill="none" />
      </svg>
      <TitleHead>广联达BIM钢筋算量软件 GGJ2013 - [C:\Users\Administrator.PC-201</TitleHead>
      <TitleTail>NRHM\Desktop\白龙村-2016-08-25-13-27-07(2166版).GGJ12]</TitleTail>
      <WinButtons>
        <svg width="12" height="12"><path d="M1 6.500h10" stroke="#222" /></svg>
        <svg width="12" height="12"><path d="M.5 3.500h8v8h-8zM3.500 3V.5h8v8H9" stroke="#222" fill="none" /></svg>
        <svg width="12" height="12"><path d="M1 1l10 10M11 1L1 11" stroke="#222" /></svg>
      </WinButtons>
    </TitleBar>
    <ScoreBadge>70</ScoreBadge>

    <MenuBar>
      <MenuItem>文件(F)</MenuItem>
      <MenuItem>编辑(E)</MenuItem>
      <MenuItem>楼层(L)</MenuItem>
      <MenuItem $ml={-2}>构件(N)</MenuItem>
      <MenuItem $ml={1}>绘图(D)</MenuItem>
      <MenuItem $ml={1}>修改(M)</MenuItem>
      <MenuItem $ml={1}>钢筋量(Q)</MenuItem>
      <MenuItem $ml={1}>视图(V)</MenuItem>
      <MenuItem>工具(T)</MenuItem>
      <MenuItem>云应用(Y)</MenuItem>
      <MenuItem>BIM应用(I)</MenuItem>
      <MenuItem $ml={2}>在线服务(S)</MenuItem>
      <MenuItem>帮助(H)</MenuItem>
      <MenuItem $ml={-2}>版本号(B)</MenuItem>
      <Tool icon="changeDoc" tg={4}>新建变更</Tool>
      <Caret $ml={-3} />
      <Tool icon="robot" ml={-3}>广小二</Tool>
      <Banner>如何快速布置自定义范..</Banner>
      <Account>
        <Ico name="user" />
        <Label $size={13}>13907298339</Label>
        <Caret $ml={6} />
        <Label $ml={8}>造价豆:0</Label>
        <Label $ml={8}><Ico name="bell" /></Label>
        <More $ml={32}>»</More>
      </Account>
    </MenuBar>

    <ToolRow $h={27}>
      <Bar $w={151} $pl={5} $gap={8}>
        <Ico name="newDoc" />
        <Ico name="open" />
        <Caret $ml={-1} />
        <Ico name="save" />
        <Sep />
        <Ico name="undo" />
        <Caret />
        <More $ml={20}>»</More>
      </Bar>
      <Bar $w={549} $pl={4} $gap={7}>
        <Tool icon="define">定义</Tool>
        <Tool icon="sigma">汇总计算</Tool>
        <Tool icon="cloud">云检查</Tool>
        <Tool icon="align">平齐板顶</Tool>
        <Tool icon="binoculars">查找图元</Tool>
        <Tool icon="glasses">查看钢筋量</Tool>
        <Tool icon="batch" off>批量选择</Tool>
      </Bar>
      <Bar $grow $pl={2} $gap={6}>
        <ComboBox $w={61}>
          <ComboValue $flush><Tool icon="square" tg={2}>二维</Tool></ComboValue>
          <ComboArrow><Caret /></ComboArrow>
        </ComboBox>
        <Tool icon="box">俯视</Tool>
        <Caret />
        <Tool icon="orbit" ml={1}>动态观察</Tool>
        <Tool icon="part3d">局部三维</Tool>
        <Sep />
        <Tool icon="fullscreen">全屏</Tool>
        <Tool icon="zoom">缩放</Tool>
        <Caret />
        <Tool icon="pan" ml={3}>平移</Tool>
        <Caret />
        <Tool icon="rotateScreen">屏幕旋转</Tool>
        <Caret $ml={-2} />
        <Sep />
        <Tool icon="floors">选择楼层</Tool>
        <More $ml={24}>»</More>
      </Bar>
    </ToolRow>

    <Workspace>
      <Nav>
        <NavHead>
          <NavTitle>模块导航栏</NavTitle>
          <PinBox>
            <svg width="9" height="9"><path d="M2 0h5v5H2zM4.500 5v4" stroke="#fff" fill="none" /></svg>
          </PinBox>
          <NavClose>
            <svg width="8" height="8"><path d="M1 1l6 6M7 1L1 7" stroke="#fff" /></svg>
          </NavClose>
        </NavHead>
        <NavButton>工程设置</NavButton>
        <NavButton>绘图输入</NavButton>
        <TreeBox>
          <TreeTools>
            <Ico name="plusTree" />
            <Ico name="minusTree" />
          </TreeTools>
          <TreeBody>
            <TreeList>
              {tree.map((item, i) => <TreeItem key={i} item={item} />)}
            </TreeList>
            <Scroll>
              <ScrollBtn><Chev dir="up" /></ScrollBtn>
              <ScrollThumb />
              <ScrollBtn><Chev dir="down" /></ScrollBtn>
            </Scroll>
          </TreeBody>
        </TreeBox>
        <NavButton>单构件输入</NavButton>
        <NavButton>报表预览</NavButton>
      </Nav>

      <Main>
        <ToolRow $h={26} $mb={1}>
          <Bar $w={791} $pl={2} $gap={6}>
            <Grip $ml={1} />
            <Tool icon="eraser" ml={-1}>删除</Tool>
            <Sep />
            <Tool icon="copy">复制</Tool>
            <Tool icon="mirror">镜像</Tool>
            <Sep />
            <Tool icon="move">移动</Tool>
            <Tool icon="rotate">旋转</Tool>
            <Sep />
            <Tool icon="extend">延伸</Tool>
            <Tool icon="trim">修剪</Tool>
            <Sep />
            <Tool icon="breakIco" ml={2}>打断</Tool>
            <Tool icon="merge">合并</Tool>
            <Tool icon="split" off ml={2}>分割</Tool>
            <Sep />
            <Tool icon="alignLeft">对齐</Tool>
            <Caret $ml={-3} />
            <Tool icon="offset" ml={2}>偏移</Tool>
            <Tool icon="stretch">拉伸</Tool>
            <Sep />
            <Tool icon="gripIco" off>设置夹点</Tool>
          </Bar>
        </ToolRow>

        <ToolRow $h={27} $mb={2}>
          <Bar $w={641} $pl={10} $gap={2}>
            <Combo w={58}>首层</Combo>
            <Combo w={70}>常用构件类型</Combo>
            <Combo w={70}>梁</Combo>
            <Combo w={70}>KL-1 ( 2 )</Combo>
            <Combo w={70}>分层1</Combo>
            <Sep $mx={2} />
            <Tool icon="prop" ml={1}>属性</Tool>
            <Tool icon="editBar" ml={4} tg={3}>编辑钢筋</Tool>
            <Tool icon="list" ml={5}>构件列表</Tool>
            <Tool icon="pick" ml={6} tg={3}>拾取构件</Tool>
          </Bar>
          <Bar $w={424} $pl={0} $gap={7}>
            <Grip />
            <Tool icon="twoPoint">两点</Tool>
            <Tool icon="parallel">平行</Tool>
            <Tool icon="angle">点角</Tool>
            <Caret />
            <Tool icon="arc" ml={-4}>三点辅轴</Tool>
            <Caret />
            <Tool icon="eraser">删除辅轴</Tool>
            <Tool icon="dimension" on tg={2}>尺寸标注</Tool>
            <SplitArrow><Caret /></SplitArrow>
          </Bar>
        </ToolRow>

        <ToolRow $h={27} $mb={1}>
          <Bar $w={1114} $pl={3} $gap={6}>
            <Grip />
            <Tool icon="cursor" tg={3}>选择</Tool>
            <Caret />
            <Sep />
            <Tool icon="line">直线</Tool>
            <Tool icon="pointLen">点加长度</Tool>
            <Tool icon="arc3">三点画弧</Tool>
            <Caret />
            <Combo w={57} ml={-3} />
            <Tool icon="square">矩形</Tool>
            <Sep />
            <Tool icon="smart">智能布置</Tool>
            <Caret $ml={-4} />
            <Sep />
            <Tool icon="funnelEdit" ml={2}>修改梁段属性</Tool>
            <Tool icon="inPlace" on tg={3} ml={-2}>原位标注</Tool>
            <Caret $ml={-1} />
            <Tool icon="lift">重提梁跨</Tool>
            <Caret />
            <Tool icon="brush">梁跨数据复制</Tool>
            <Caret />
            <Tool icon="support" tg={3} ml={2}>批量识别梁支座</Tool>
            <Tool icon="applySame" ml={1}>应用到同名梁</Tool>
            <More $ml={15}>»</More>
          </Bar>
          <Bar $grow $pl={4}>
            <Grip />
          </Bar>
        </ToolRow>

        <Canvas>
          <CadDrawing />
          <Popup>
            <PopupHead>
              1跨左支座筋
              <PopupClose>
                <svg width="8" height="8"><path d="M0 0l8 8M8 0L0 8" stroke="#111" strokeWidth="1.4" /></svg>
              </PopupClose>
            </PopupHead>
            <PopupCombo>
              <Chev dir="down" color="#777" />
            </PopupCombo>
          </Popup>
        </Canvas>

        <ToolRow $h={25}>
          <Bar $w={476} $pl={3} $gap={4}>
            <Grip />
            <Tool icon="ortho" ml={2}>正交</Tool>
            <Tool icon="snap" on ml={2}>对象捕捉</Tool>
            <Tool icon="dynamic" on ml={-4}>动态输入</Tool>
            <Grip />
            <Tool icon="cross" tg={5}>交点</Tool>
            <Tool icon="perp" on tg={2}>垂点</Tool>
            <Tool icon="midpoint" on ml={-4}>中点</Tool>
            <Tool icon="vertex" tg={5}>顶点</Tool>
            <Tool icon="coord">坐标</Tool>
          </Bar>
          <Bar $grow $pl={3} $gap={3}>
            <Grip />
            <Combo w={58} ml={-3}>不偏移</Combo>
            <Sep />
            <GrayText>X=</GrayText>
            <NumBox>0<SpinArrows /></NumBox>
            <GrayText>mm</GrayText>
            <GrayText $ml={2}>Y=</GrayText>
            <NumBox>0<SpinArrows /></NumBox>
            <GrayText>mm</GrayText>
            <Sep />
            <CheckBox />
            <Label $ml={4}>旋转</Label>
            <NumBox $w={62} $ml={4}>0.000<SpinArrows /></NumBox>
            <span>°</span>
          </Bar>
        </ToolRow>

        <GridPanel>
          <GridGrip />
          <GridBody>
            <GridTools>
              <Tool icon="copySpan">复制跨数据</Tool>
              <Tool icon="pasteSpan" off ml={-2} tg={3}>粘贴跨数据</Tool>
              <ToolBtn $off>输入当前列数据</ToolBtn>
              <ToolBtn $off>删除当前列数据</ToolBtn>
              <ToolBtn>页面设置</ToolBtn>
              <ToolBtn>调换起始跨</ToolBtn>
              <ToolBtn>悬臂钢筋代号</ToolBtn>
            </GridTools>
            <TableWrap>
              <Table>
                <colgroup>
                  {colWidths.map((w, i) => <col key={i} width={w} />)}
                </colgroup>
                <thead>
                  <tr>
                    <Th rowSpan={2} />
                    <Th rowSpan={2} $accent>跨号</Th>
                    <Th colSpan={2}>标高<Hw>(m)</Hw></Th>
                    <Th colSpan={7}>构件尺寸<Hw>(mm)</Hw></Th>
                    <Th rowSpan={2}>上通长筋</Th>
                    <Th colSpan={3}>上部钢筋</Th>
                    <Th colSpan={2}>下部钢筋</Th>
                    <Th rowSpan={2} />
                  </tr>
                  <tr>
                    <Th>起点标高</Th>
                    <Th>终点标高</Th>
                    <Th><Hw>A1</Hw></Th>
                    <Th><Hw>A2</Hw></Th>
                    <Th><Hw>A3</Hw></Th>
                    <Th><Hw>A4</Hw></Th>
                    <Th>跨长</Th>
                    <Th>截面<Hw>(B*H)</Hw></Th>
                    <Th>距左边线距离</Th>
                    <Th>左支座钢筋</Th>
                    <Th>跨中钢筋</Th>
                    <Th>右支座钢筋</Th>
                    <Th>下通长筋</Th>
                    <Th>下部钢筋</Th>
                  </tr>
                </thead>
                <tbody>
                  <tr>
                    <RowHead $center $sel><Hw>1</Hw></RowHead>
                    <ActiveCell><Hw>1</Hw><FillHandle /></ActiveCell>
                    <Cell sel v="4.47" />
                    <Cell sel v="4.47" />
                    <Cell sel v="(100)" />
                    <Cell sel v="(200)" />
                    <Cell sel v="(300)" />
                    <Cell sel />
                    <Cell sel v="(6600)" />
                    <Cell sel v="(200*500)" />
                    <Cell sel v="(100)" />
                    <Cell sel />
                    <Cell sel />
                    <Cell sel />
                    <Td $sel><Rebar n="3" d="20" /></Td>
                    <Cell sel />
                    <Td $sel><Rebar n="3" d="25" /></Td>
                    <Cell sel v="N-" />
                  </tr>
                  <tr>
                    <RowHead $center><Hw>2</Hw></RowHead>
                    <Cell v="2" />
                    <Cell v="4.47" />
                    <Cell v="4.47" />
                    <Cell />
                    <Cell v="(100)" />
                    <Cell v="(100)" />
                    <Cell v="(200)" />
                    <Cell v="(2400)" />
                    <Cell v="(200*500)" />
                    <Cell v="(100)" />
                    <Cell />
                    <Td><Rebar n="3" d="20" /></Td>
                    <Cell />
                    <Cell />
                    <Cell />
                    <Td><Rebar n="2" d="14" /></Td>
                    <Cell />
                  </tr>
                </tbody>
              </Table>
            </TableWrap>
            <HScroll>
              <HScrollBtn><Chev dir="left" color="#444" /></HScrollBtn>
              <Spacer $w={2} />
              <HScrollThumb />
              <HScrollBtn><Chev dir="right" color="#444" /></HScrollBtn>
              <Spacer $w={2} />
            </HScroll>
          </GridBody>
        </GridPanel>
      </Main>
    </Workspace>

    <StatusBar>
      <StatusCell $w={148}><Hw>X=2378 Y=5431</Hw></StatusCell>
      <StatusCell $w={78}>层高<Hw>:4.5m</Hw></StatusCell>
      <StatusCell $w={98}>底标高<Hw>:-0.03m</Hw></StatusCell>
      <StatusCell $w={47}><Hw>1(3)</Hw></StatusCell>
      <StatusCell>
        按鼠标左键选择梁图元<Hw>,</Hw>按右键或<Hw>ESC</Hw>退出<Hw>;</Hw>可以通过回车键及<Hw>shift+"</Hw>→←↑<Hw>"</Hw>光标键在跨之间、上下输入框之间进行切换
      </StatusCell>
    </StatusBar>

    <Ime>
      <svg width="27" height="26" viewBox="0 0 27 26">
        <rect x="1" y="2" width="24" height="22" rx="4" fill="#f4511e" transform="rotate(-8 13 13)" />
        <path d="M18 8c-3-2-9-2-9 2 0 4 9 2 9 6 0 4-7 4-10 1" stroke="#fff" strokeWidth="3.4" fill="none" />
      </svg>
      <ImeChar>中</ImeChar>
      <svg width="14" height="16"><circle cx="3" cy="5" r="1.6" fill="none" stroke="#1573c9" /><path d="M10 6c2 2 1 5-2 7" stroke="#1573c9" strokeWidth="2" fill="none" /></svg>
      <Spacer $w={3} />
      <svg width="14" height="18"><rect x="4" y="1" width="6" height="10" rx="3" fill="#1573c9" /><path d="M2 8c0 6 10 6 10 0M7 13v4M3 17h8" stroke="#1573c9" fill="none" /></svg>
      <Spacer $w={1} />
      <svg width="16" height="14"><rect width="16" height="13" rx="2" fill="#1573c9" /><path d="M2 4h12M2 7h12" stroke="#fff" strokeDasharray="2 1" /><path d="M4 10h8" stroke="#fff" /></svg>
      <Spacer $w={1} />
      <svg width="16" height="18"><circle cx="7" cy="4" r="3" fill="#b8c4d0" /><path d="M1 16c0-7 12-7 12 0z" fill="#b8c4d0" /></svg>
      <svg width="15" height="15"><path d="M4 0l3.500 2L11 0l4 4-2 2v9H2V6L0 4z" fill="#1573c9" /></svg>
      <svg width="14" height="16"><path d="M13 3l-3 3-2-2 3-3c-3-1-5 1-4.500 4L0 12l2 3 6.500-7c3 .5 5-2 4.500-5z" fill="#1573c9" /></svg>
    </Ime>

    <Taskbar>
      <StartBtn>
        <svg width="15" height="15" viewBox="0 0 15 15"><path d="M0 2l6-1v6H0zM7 1l8-1v7H7zM0 8h6v6l-6-1zM7 8h8v7l-8-1z" fill="#fff" /></svg>
      </StartBtn>
      <SearchBox>
        <svg width="20" height="20"><circle cx="10" cy="10" r="8" fill="none" stroke="#e8e8e8" strokeWidth="2" /></svg>
        <SearchHint>在这里输入你要搜索的内容</SearchHint>
        <svg width="12" height="20"><rect x="3" y="1" width="6" height="12" rx="3" fill="none" stroke="#999" /><path d="M1 9c0 6 10 6 10 0M6 15v4M3 19h6" stroke="#999" fill="none" /></svg>
      </SearchBox>
      <TaskCell $ml={2}>
        <svg width="24" height="24" viewBox="0 0 24 24"><path d="M11 11C4 11 1 8 2 4c1-3 8-4 9 2zM13 11c0-7 3-10 7-9 3 1 4 8-2 9zM13 13c7 0 10 3 9 7-1 3-8 4-9-2zM11 13c0 7-3 10-7 9-3-1-4-8 2-9z" fill="#e6e6e6" /></svg>
      </TaskCell>
      <TaskCell>
        <svg width="20" height="20" viewBox="0 0 20 20"><path d="M15 3C8 0 2 5 3 11c1 6 9 8 12 3 2-4-2-8-5-6-3 2-1 6 2 5" stroke="#b8b8b8" strokeWidth="1.6" fill="none" /></svg>
      </TaskCell>
      <TaskDivider />
      <TaskCell>
        <svg width="22" height="22" viewBox="0 0 22 22"><path d="M2 12C2 5 6 1 12 1c6 0 9 4 9 10v2H8c0 4 7 5 12 2v5c-7 3-18 1-18-8zM8 9h7c0-4-6-4-7 0z" fill="#1479d4" /></svg>
      </TaskCell>
      <TaskCell>
        <svg width="20" height="22" viewBox="0 0 20 22"><path d="M1 6h18v16H1z" fill="#fff" /><path d="M6 6V4c0-4 8-4 8 0v2" stroke="#fff" fill="none" /><path d="M6 10h3.500v3.500H6zM10.500 10H14v3.500h-3.500zM6 14.500h3.500V18H6zM10.500 14.500H14V18h-3.500z" fill="#0a0f14" /></svg>
      </TaskCell>
      <TaskCell $ml={2} $open>
        <svg width="22" height="22" viewBox="0 0 22 22"><path d="M1 2h8l2 3h10v15H1z" fill="#f6d55c" /><path d="M1 6h20" stroke="#d8b030" /><path d="M7 12h8v8H7z" fill="#3a9ad8" /></svg>
      </TaskCell>
      <TaskCell $open>
        <svg width="24" height="24" viewBox="0 0 24 24"><path d="M17 3C9-1 2 5 3 12c1 8 11 11 16 6 3-3 3-7 2-9h-8v4h4c-1 3-7 3-8-2-1-5 4-8 8-5z" fill="#1b8ae0" /></svg>
      </TaskCell>
      <TaskCell $ml={2} $open>
        <svg width="24" height="24" viewBox="0 0 24 24"><circle cx="12" cy="12" r="11" fill="#6cc04a" /><circle cx="12" cy="12" r="6" fill="#e4f5d6" /><path d="M7 12h10M8 8c3-2 8-1 9 2M8 16c3 2 7 2 9 0" stroke="#4aa02a" strokeWidth="2" fill="none" /></svg>
      </TaskCell>
      <TaskCell $ml={2} $open>
        <svg width="24" height="24" viewBox="0 0 24 24"><rect x="1" y="1" width="22" height="22" rx="2" fill="#f0a030" /><path d="M5 5h11v15H5z" fill="#fbe8b8" /><path d="M7 9h7M7 12h7M7 15h7" stroke="#b08a40" /><path d="M21 2L12 15" stroke="#b83a10" strokeWidth="2" /></svg>
      </TaskCell>
      <TaskCell $active $open>
        <svg width="24" height="26" viewBox="0 0 24 26"><rect width="24" height="26" rx="5" fill="#0f94ee" /><path d="M12 4v18M5 12h14M5 12c0 4 3 6 7 6M19 12c0-4-3-6-7-6" stroke="#fff" strokeWidth="2" fill="none" /></svg>
      </TaskCell>
      <Tray>
        <TrayStack $w={70} $mr={11}>31%<br />CPU使用</TrayStack>
        <TrayIcon><Chev dir="up" color="#eee" /></TrayIcon>
        <TrayIcon>
          <svg width="18" height="14"><path d="M3 5h12v8H3z" fill="none" stroke="#eee" /><path d="M4 6h7v6H4z" fill="#eee" /><path d="M5 0v5M9 0v5" stroke="#eee" /></svg>
        </TrayIcon>
        <TrayIcon>
          <svg width="16" height="16"><path d="M1 15A14 14 0 0 1 15 1M4 15A11 11 0 0 1 15 4M7 15a8 8 0 0 1 8-8M10 15a5 5 0 0 1 5-5" stroke="#bbb" fill="none" /></svg>
        </TrayIcon>
        <TrayIcon $w={20}>
          <svg width="16" height="16"><path d="M1 5h3l4-4v14l-4-4H1z" fill="none" stroke="#eee" /><path d="M11 5c1 2 1 4 0 6M13 3c2 3 2 7 0 10" stroke="#eee" fill="none" /></svg>
        </TrayIcon>
        <TrayIcon $w={38}>
          <svg width="24" height="16"><rect x=".5" y=".5" width="23" height="15" fill="none" stroke="#eee" /><path d="M3 4h18M3 8h18" stroke="#eee" strokeDasharray="2 1" /><path d="M6 12h12" stroke="#eee" /></svg>
        </TrayIcon>
        <TrayIcon $w={20}>中</TrayIcon>
        <TrayIcon $w={38}>
          <svg width="17" height="18" viewBox="0 0 17 18"><rect x="1" y="1" width="15" height="16" rx="3" fill="#f4511e" /><path d="M12 5c-2-1-6-1-6 2s6 1 6 4-5 3-7 1" stroke="#fff" strokeWidth="2" fill="none" /></svg>
        </TrayIcon>
        <TrayStack $w={60} $ml={10} $mr={11}>13:10<br />2017/9/3</TrayStack>
        <TrayIcon $w={20}>
          <svg width="16" height="18"><path d="M1 1h14v12h-5l-2 3-2-3H1z" fill="none" stroke="#eee" strokeWidth="1.2" /></svg>
        </TrayIcon>
        <Spacer $w={23} />
      </Tray>
    </Taskbar>
  </Page>
);

export default App;
